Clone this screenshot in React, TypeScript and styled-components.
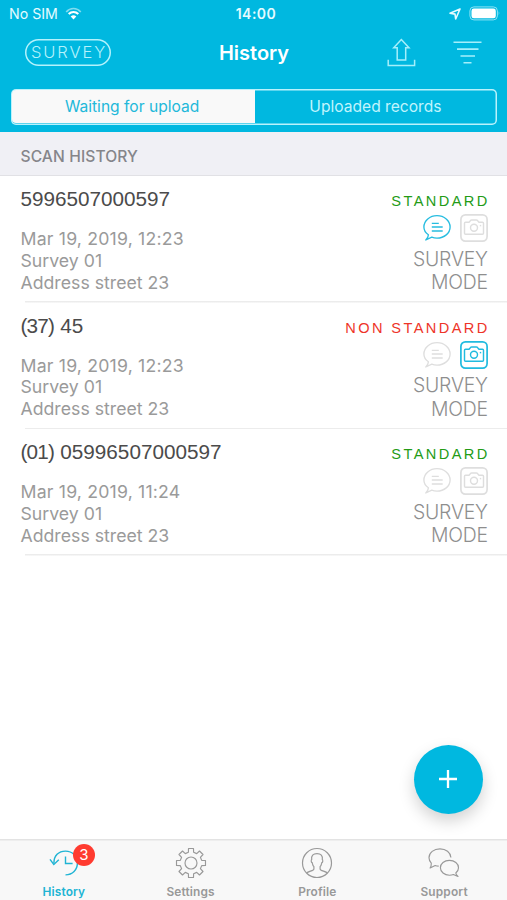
import React from "react";
import styled, { createGlobalStyle } from "styled-components";

const CYAN = "#00b8e0";

const GlobalStyle = createGlobalStyle`
  * { box-sizing: border-box; }
  body { margin: 0; background: #fff; }
`;

const Screen = styled.div`
  position: relative;
  width: 507px;
  height: 900px;
  display: flex;
  flex-direction: column;
  overflow: hidden;
  background: #fff;
  font-family: Inter, "Liberation Sans", sans-serif;
`;

const Header = styled.header`
  height: 132px;
  flex: none;
  background: ${CYAN};
  color: #fff;
`;

const StatusBar = styled.div`
  height: 27px;
  display: grid;
  grid-template-columns: 1fr auto 1fr;
  align-items: center;
  padding: 0 6px 0 9px;
  color: #e4fbff;
`;

const Carrier = styled.div`
  display: flex;
  align-items: center;
  gap: 7px;
  font-size: 14.2px;
  letter-spacing: 0;
  line-height: 18px;
`;

const Clock = styled.div`
  font-size: 14px;
  font-weight: 600;
  letter-spacing: 0.5px;
  line-height: 18px;
  padding-left: 2px;
`;

const StatusIcons = styled.div`
  display: flex;
  justify-content: flex-end;
  align-items: center;
  gap: 8px;
`;

const NavBar = styled.div`
  height: 50px;
  display: grid;
  grid-template-columns: 1fr auto 1fr;
  align-items: center;
  padding: 0 25px 0 25px;
`;

const ModePill = styled.button`
  width: 86px;
  height: 27px;
  padding: 0 0 0 2px;
  border: 0;
  border-radius: 14px;
  box-shadow: inset 0 0 0 1.5px #b4f2fc;
  background: none;
  color: #b4f2fc;
  font: 300 16.5px/27px Inter, sans-serif;
  letter-spacing: 1.9px;
`;

const Title = styled.h1`
  margin: 1px 0 0;
  padding-left: 1px;
  font-size: 20px;
  font-weight: 600;
  letter-spacing: 0;
  line-height: 26px;
`;

const NavActions = styled.div`
  display: flex;
  justify-content: flex-end;
  align-items: center;
  gap: 37px;
`;

const Segmented = styled.div`
  display: flex;
  height: 36px;
  margin: 11.5px 10px 0 10.5px;
  padding: 1.5px;
  border-radius: 5px;
  box-shadow: inset 0 0 0 1.5px #b9f2fc;
  overflow: hidden;
`;

const Segment = styled.button<{ $active?: boolean }>`
  flex: 1;
  padding: ${(p) => (p.$active ? "1px 3px 0 0" : "1px 0 0")};
  border: 0;
  border-radius: ${(p) => (p.$active ? "4px 0 0 4px" : "0")};
  background: ${(p) => (p.$active ? "#f9f9f9" : "transparent")};
  color: ${(p) => (p.$active ? "#22b8da" : "#c0f4fd")};
  font: 400 15.6px/32px Inter, sans-serif;
  letter-spacing: 0;
`;

const SectionTitle = styled.h2`
  flex: none;
  height: 44px;
  margin: 0;
  padding: 15px 0 0 20.5px;
  border-bottom: 1px solid #e1e1e5;
  background: #f0f0f5;
  color: #85858a;
  font-size: 15.6px;
  font-weight: 500;
  letter-spacing: 0.1px;
  line-height: 20px;
`;

const Row = styled.article`
  flex: none;
  display: flex;
  justify-content: space-between;
  height: 126.67px;
  padding: 0 19.2px 0 20.5px;
  background: linear-gradient(#ececec, #ececec) 25px 100% / 100% 1.5px no-repeat;
`;

const Code = styled.div`
  margin-top: 10px;
  font: 400 20.7px/26px "Liberation Sans", Arial, sans-serif;
  color: #4b4b4b;
  white-space: nowrap;
`;

const CodePrefix = styled.span`
  margin-right: 0.5px;
  letter-spacing: -0.8px;
`;

const Details = styled.div`
  margin-top: 16px;
  color: #9a9a9a;
  font-size: 17.7px;
  line-height: 21.8px;
  white-space: nowrap;
`;

const DateLine = styled.div`
  letter-spacing: 0.18px;
`;

const RecordSide = styled.div`
  display: flex;
  flex-direction: column;
  align-items: flex-end;
`;

const Status = styled.div<{ $ok: boolean }>`
  margin: 15px -1.9px 0 0;
  font: 400 14.6px/20px "Liberation Sans", Arial, sans-serif;
  letter-spacing: 2.4px;
  color: ${(p) => (p.$ok ? "#239b16" : "#ee3428")};
`;

const Flags = styled.div`
  display: flex;
  align-items: center;
  gap: 9px;
  height: 28px;
  margin-top: 3px;
`;

const Mode = styled.div`
  margin-top: 5.5px;
  width: 82px;
  text-align: right;
  color: #8e8e8e;
  font: 300 19.4px/23.6px Inter, sans-serif;
  letter-spacing: -0.2px;
`;

const AddButton = styled.button`
  position: absolute;
  right: 24.5px;
  bottom: 86.5px;
  width: 69px;
  height: 69px;
  padding: 0;
  border: 0;
  border-radius: 50%;
  background: ${CYAN};
  box-shadow: 0 7px 16px rgba(0, 0, 0, 0.18);
  display: grid;
  place-items: center;
`;

const TabBar = styled.nav`
  flex: none;
  display: grid;
  grid-template-columns: repeat(4, 1fr);
  height: 61px;
  margin-top: auto;
  background: #f8f8f8;
  box-shadow: inset 0 1.5px 0 #e3e3e3;
`;

const Tab = styled.a<{ $active?: boolean }>`
  position: relative;
  display: flex;
  flex-direction: column;
  align-items: center;
  padding: 8px 0 0 1px;
  color: ${(p) => (p.$active ? "#20b4d4" : "#999")};
  svg { display: block; }
`;

const TabLabel = styled.span`
  margin-top: 5px;
  font-size: 11.9px;
  font-weight: 600;
  letter-spacing: 0.15px;
  line-height: 16px;
`;

const Badge = styled.span`
  position: absolute;
  left: 73px;
  top: 5px;
  width: 22px;
  height: 22px;
  border-radius: 50%;
  background: #ff3b30;
  color: #fff;
  font-size: 15px;
  line-height: 22px;
  text-align: center;
`;

const WifiIcon = () => (
  <svg width="17" height="13" viewBox="0 0 17 13" fill="none" stroke="#fff">
    <path d="M1.2 5C5.3 .4 11.7 .4 15.8 5" strokeWidth="1.6" opacity=".5" />
    <path d="M3.7 7.1C6.5 4.2 10.5 4.2 13.3 7.1" strokeWidth="2.1" />
    <path d="M8.5 12.5L5.7 9.5Q8.5 7.1 11.3 9.5Z" fill="#fff" stroke="none" />
  </svg>
);

const LocationIcon = () => (
  <svg width="12" height="12" viewBox="0 0 12 12" fill="none" stroke="#e4fbff" strokeWidth="1.6" strokeLinejoin="round">
    <path d="M11 1L1 5.3L6 6.1L6.7 11Z" />
  </svg>
);

const BatteryIcon = () => (
  <svg width="32" height="15" viewBox="0 0 32 15">
    <rect x=".9" y=".9" width="27.5" height="13" rx="4" fill="none" stroke="#8ce2f5" strokeWidth="1" />
    <rect x="2.5" y="2.5" width="24.3" height="9.8" rx="2.4" fill="#fff" />
    <path d="M29.7 5.3Q31.3 7.4 29.7 9.6Z" fill="#8ce2f5" />
  </svg>
);

const ShareIcon = () => (
  <svg width="29" height="29" viewBox="0 0 29 29" fill="none" stroke="#a5effb" strokeWidth="1.5">
    <path d="M1.2 21.8V27.5H27.6V21.8" />
    <path d="M14.3 1.5L22 9.8H18.7V22H10.2V9.8H6.7Z" />
  </svg>
);

const FilterIcon = () => (
  <svg width="29" height="25" viewBox="0 0 29 25" stroke="#a5effb" strokeWidth="1.6">
    <path d="M.5 2.2H28.5M4 9.1H25.5M7.5 16H22M10.5 22.8H18.5" />
  </svg>
);

const CommentIcon = ({ active }: { active: boolean }) => (
  <svg width="28" height="28" viewBox="0 0 28 28" fill="none" stroke={active ? "#27bde0" : "#dedede"} strokeWidth="1.35" strokeLinejoin="round">
    <path d="M5.4 20.7C2.6 18.8 .9 16 .9 12.9C.9 6.6 6.8 1.6 14 1.6S27.1 6.6 27.1 12.9S21.2 24.1 14 24.1C12.1 24.1 10.4 23.8 8.8 23.1L2.8 26C4.1 24.6 5.4 23 5.4 20.7Z" />
    <path d="M8.8 9.4H15.8M8.8 13H19.7M8.8 17H19.7" />
  </svg>
);

const CameraIcon = ({ active }: { active: boolean }) => (
  <svg width="28" height="28" viewBox="0 0 28 28" fill="none" stroke={active ? "#20bbdf" : "#dedede"} strokeWidth="1.45" strokeLinejoin="round">
    <rect x=".9" y=".9" width="26.2" height="26.2" rx="4.5" strokeWidth="1.7" />
    <path d="M4.5 9.3Q4.5 8.3 5.5 8.3H8.7Q9.4 8.3 9.8 7.4Q10.4 5.9 11.6 5.9H16.4Q17.6 5.9 18.2 7.4Q18.6 8.3 19.3 8.3H22.5Q23.5 8.3 23.5 9.3V19.3Q23.5 20.3 22.5 20.3H5.5Q4.5 20.3 4.5 19.3Z" />
    <circle cx="14" cy="13.8" r="3.5" />
    <path d="M19.8 11.6H21.2" />
  </svg>
);

const PlusIcon = () => (
  <svg width="18" height="18" viewBox="0 0 18 18" stroke="#fff" strokeWidth="2.3">
    <path d="M9 0V18M0 9H18" />
  </svg>
);

const HistoryIcon = () => (
  <svg width="32" height="32" viewBox="0 0 32 32" fill="none" stroke="currentColor" strokeWidth="1.4">
    <path d="M5.9 16C5.9 8.8 10.5 4.1 17.5 4.1C24.5 4.1 29.4 9.1 29.4 16S24.5 27.9 17.5 27.9" />
    <path d="M2 12.3L5.8 17.5L10.8 12.8" />
    <path d="M17.5 9.5V16.5H24.6" />
  </svg>
);

const gearPath = (() => {
  const pts: string[] = [];
  for (let i = 0; i < 8; i++) {
    const c = (i * Math.PI) / 4 - Math.PI / 2;
    for (const [offset, radius] of [[-0.24, 11], [-0.17, 14.7], [0.17, 14.7], [0.24, 11]]) {
      pts.push(`${(16 + radius * Math.cos(c + offset)).toFixed(2)} ${(16 + radius * Math.sin(c + offset)).toFixed(2)}`);
    }
  }
  return `M${pts.join("L")}Z`;
})();

const GearIcon = () => (
  <svg width="32" height="32" viewBox="0 0 32 32" fill="none" stroke="currentColor" strokeWidth="1.15" strokeLinejoin="round">
    <path d={gearPath} />
    <circle cx="16" cy="16" r="6" />
  </svg>
);

const ProfileIcon = () => (
  <svg width="32" height="32" viewBox="0 0 32 32" fill="none" stroke="currentColor" strokeWidth="1.2">
    <circle cx="16" cy="16" r="14.5" />
    <path d="M5.7 26C7.3 24.1 12.9 23.9 12.9 21.9V19.6C11.8 18.7 11.5 17 11.2 15.7C9.9 15.4 10.1 12.8 10.7 12.5C10.1 8.8 12.1 6.6 16 6.6S21.9 8.8 21.3 12.5C21.9 12.8 22.1 15.4 20.8 15.7C20.5 17 20.2 18.7 19.1 19.6V21.9C19.1 23.9 24.7 24.1 26.3 26" />
  </svg>
);

const SupportIcon = () => (
  <svg width="32" height="32" viewBox="0 0 32 32" fill="none" stroke="currentColor" strokeWidth="1.15" strokeLinejoin="round">
    <path d="M10.7 19.1C9.5 19.1 8.3 18.9 7.2 18.5L2.1 21C3.1 19.4 3.4 17.9 3.3 16.1C1.8 14.5 1 12.6 1 10.7C1 5.7 5.8 1.9 12 1.9C18 1.9 22.5 5.5 22.9 10.5" />
    <path d="M27.8 26C29.4 24.7 30.5 22.8 30.5 20.7C30.5 16.5 26.5 13.4 21.4 13.4S12.4 16.5 12.4 20.7S16.4 28.2 21.4 28.2C22.8 28.2 24.2 28 25.4 27.5L30 29.5C28.8 28.4 28 27.5 27.8 26Z" />
  </svg>
);

const records = [
  { prefix: "", code: "5996507000597", date: "Mar 19, 2019, 12:23", ok: true, comment: true, photo: false },
  { prefix: "(37)", code: "45", date: "Mar 19, 2019, 12:23", ok: false, comment: false, photo: true },
  { prefix: "(01)", code: "05996507000597", date: "Mar 19, 2019, 11:24", ok: true, comment: false, photo: false },
];

export default function App() {
  return (
    <Screen>
      <GlobalStyle />
      <Header>
        <StatusBar>
          <Carrier>No SIM <WifiIcon /></Carrier>
          <Clock>14:00</Clock>
          <StatusIcons><LocationIcon /><BatteryIcon /></StatusIcons>
        </StatusBar>
        <NavBar>
          <ModePill>SURVEY</ModePill>
          <Title>History</Title>
          <NavActions><ShareIcon /><FilterIcon /></NavActions>
        </NavBar>
        <Segmented>
          <Segment $active>Waiting for upload</Segment>
          <Segment>Uploaded records</Segment>
        </Segmented>
      </Header>
      <SectionTitle>SCAN HISTORY</SectionTitle>
      {records.map((r) => (
        <Row key={r.code}>
          <div>
            <Code>
              {r.prefix && <><CodePrefix>{r.prefix}</CodePrefix>{" "}</>}
              {r.code}
            </Code>
            <Details>
              <DateLine>{r.date}</DateLine>
              <div>Survey 01</div>
              <div>Address street 23</div>
            </Details>
          </div>
          <RecordSide>
            <Status $ok={r.ok}>{r.ok ? "STANDARD" : "NON STANDARD"}</Status>
            <Flags>
              <CommentIcon active={r.comment} />
              <CameraIcon active={r.photo} />
            </Flags>
            <Mode>SURVEY MODE</Mode>
          </RecordSide>
        </Row>
      ))}
      <AddButton aria-label="Add"><PlusIcon /></AddButton>
      <TabBar>
        <Tab $active><HistoryIcon /><Badge>3</Badge><TabLabel>History</TabLabel></Tab>
        <Tab><GearIcon /><TabLabel>Settings</TabLabel></Tab>
        <Tab><ProfileIcon /><TabLabel>Profile</TabLabel></Tab>
        <Tab><SupportIcon /><TabLabel>Support</TabLabel></Tab>
      </TabBar>
    </Screen>
  );
}
